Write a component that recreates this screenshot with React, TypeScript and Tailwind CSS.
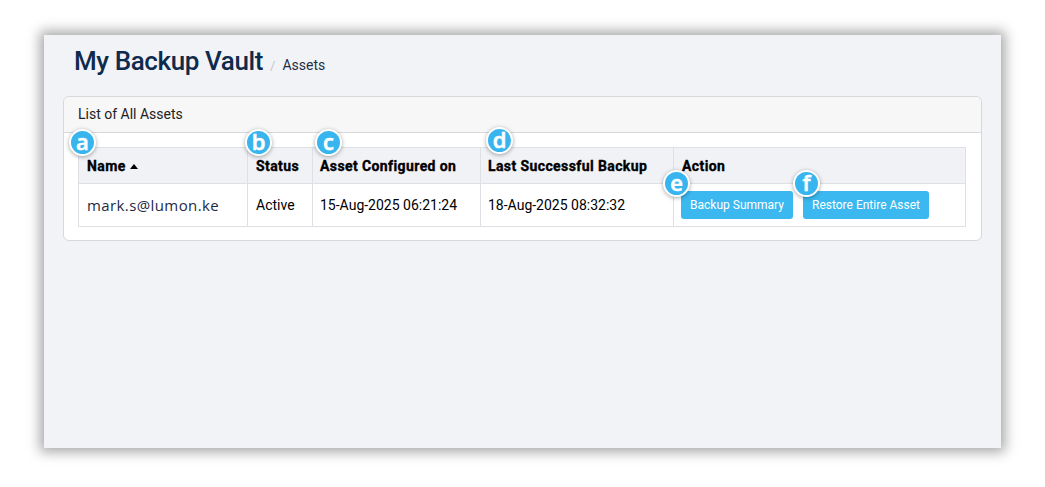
import React from 'react';

const Badge: React.FC<{ letter: string; className: string }> = ({ letter, className }) => (
  <span
    className={`absolute z-10 flex h-[27px] w-[27px] items-center justify-center rounded-full border-2 border-white bg-[#38b5ee] text-[22px] font-semibold leading-none tracking-normal text-white shadow-[0_1px_4px_rgba(0,0,0,0.35)] [-webkit-text-stroke:0.6px_white] ${className}`}
    style={{ fontFamily: "'Open Sans', sans-serif" }}
  >
    <span className="-mt-[4px]">{letter}</span>
  </span>
);

const th = 'border border-[#dde0e5] pt-[1px] text-left font-bold tracking-[0.4px] [-webkit-text-stroke:0.35px_black]';

const App: React.FC = () => {
  return (
    <div
      className="h-[487px] w-[1045px] overflow-hidden bg-white pl-[44px] pt-[35px]"
      style={{ fontFamily: 'Roboto, sans-serif' }}
    >
      <div className="h-[413px] w-[957px] bg-[#f2f3f7] px-[19px] pt-[11px] shadow-[0_0_12px_4px_rgba(0,0,0,0.35)]">
        {/* Title */}
        <div className="ml-[11px] flex items-baseline">
          <h1 className="text-[26px] font-medium leading-[30px] tracking-[-0.4px] text-[#0e2a4c]">My Backup Vault</h1>
          <span className="ml-[7px] text-[13px] text-[#c4c8ce]">/</span>
          <span className="ml-[7px] text-[14px] text-[#1f2f44]">Assets</span>
        </div>

        {/* Card */}
        <div className="mt-[20px] rounded-[6px] border border-[#d6d8dc] bg-white">
          <div className="flex h-[36px] items-center rounded-t-[6px] border-b border-[#d6d8dc] bg-[#f7f7f8] px-[14px] text-[14px] text-[#222]">
            List of All Assets
          </div>
          <div className="px-[14px] pb-[13px] pt-[14px]">
            <table className="w-[888px] border-collapse text-[14px] text-black">
              <thead>
                <tr className="h-[36px] bg-[#f1f2f6]">
                  <th className={`relative w-[169px] px-[8px] ${th}`}>
                    <Badge letter="a" className="-left-[10px] -top-[19px]" />
                    <span className="inline-flex items-center">
                      Name
                      <span className="ml-[4px] h-0 w-0 border-x-[4px] border-b-[5px] border-x-transparent border-b-black" />
                    </span>
                  </th>
                  <th className={`relative w-[65px] px-[8px] ${th}`}>
                    <Badge letter="b" className="-left-[3px] -top-[19px]" />
                    Status
                  </th>
                  <th className={`relative w-[168px] px-[7px] ${th}`}>
                    <Badge letter="c" className="left-[2px] -top-[19px]" />
                    Asset Configured on
                  </th>
                  <th className={`relative w-[193px] px-[7px] ${th}`}>
                    <Badge letter="d" className="left-[5px] -top-[21px]" />
                    Last Successful Backup
                  </th>
                  <th className={`px-[8px] ${th}`}>Action</th>
                </tr>
              </thead>
              <tbody>
                <tr className="h-[43px] bg-white">
                  <td
                    className="border border-[#dde0e5] px-[8px] text-[15px] tracking-[0.4px] text-[#1c2b45]"
                    style={{ fontFamily: "'Open Sans', sans-serif" }}
                  >
                    mark.s@lumon.ke
                  </td>
                  <td className="border border-[#dde0e5] px-[8px]">Active</td>
                  <td className="border border-[#dde0e5] px-[7px]">15-Aug-2025 06:21:24</td>
                  <td className="border border-[#dde0e5] px-[7px]">18-Aug-2025 08:32:32</td>
                  <td className="border border-[#dde0e5] px-[7px]">
                    <div className="flex items-center gap-[10px]">
                      <span className="relative">
                        <Badge letter="e" className="-left-[18px] -top-[21px]" />
                        <button className="h-[28px] w-[112px] rounded-[3px] bg-[#3ab8ef] text-[12px] text-white">
                          Backup Summary
                        </button>
                      </span>
                      <span className="relative">
                        <Badge letter="f" className="-left-[10px] -top-[21px]" />
                        <button className="h-[28px] w-[126px] rounded-[3px] bg-[#3ab8ef] text-[12px] text-white">
                          Restore Entire Asset
                        </button>
                      </span>
                    </div>
                  </td>
                </tr>
              </tbody>
            </table>
          </div>
        </div>
      </div>
    </div>
  );
};

export default App;
